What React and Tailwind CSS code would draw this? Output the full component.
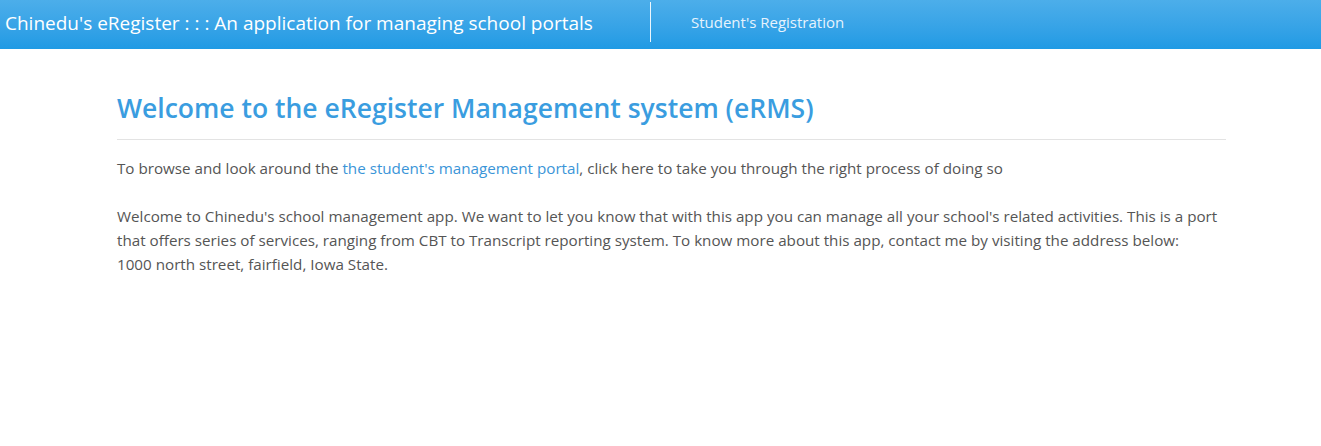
import React from "react";

const App = () => {
    return (
        <div className="min-h-[446px] bg-white font-['Open_Sans',sans-serif]">
            {/* Top bar */}
            <div className="h-[49px] flex items-start bg-gradient-to-b from-[#4caeea] to-[#1f9ae4]">
                <div className="w-[650px] pl-[5px] pt-[9px] text-[19px] leading-[28px] text-white whitespace-nowrap">
                    Chinedu's eRegister : : : An application for managing school portals
                </div>
                <div className="w-px h-[40px] mt-[2px] bg-white/90" />
                <a className="ml-[40px] pt-[11px] text-[15px] leading-[22px] text-[#e6f3fd] whitespace-nowrap">
                    Student's Registration
                </a>
            </div>

            {/* Content */}
            <div className="ml-[117px] w-[1109px] pt-[40px]">
                <h1 className="text-[26.5px] leading-[38px] font-semibold text-[#3a9de0]">
                    Welcome to the eRegister Management system (eRMS)
                </h1>
                <hr className="mt-[12px] border-t border-[#e3e3e3]" />
                <p className="mt-[16px] text-[15.2px] leading-[24px] text-[#555]">
                    To browse and look around the{" "}
                    <a className="text-[#3a95d8]">the student's management portal</a>, click here to take you through the right process of doing so
                </p>
                <p className="mt-[24px] text-[15.2px] leading-[24px] text-[#555]">
                    Welcome to Chinedu's school management app. We want to let you know that with this app you can manage all your school's related activities. This is a port that offers series of services, ranging from CBT to Transcript reporting system. To know more about this app, contact me by visiting the address below:
                    <br />
                    1000 north street, fairfield, Iowa State.
                </p>
            </div>
        </div>
    );
};

export default App;
